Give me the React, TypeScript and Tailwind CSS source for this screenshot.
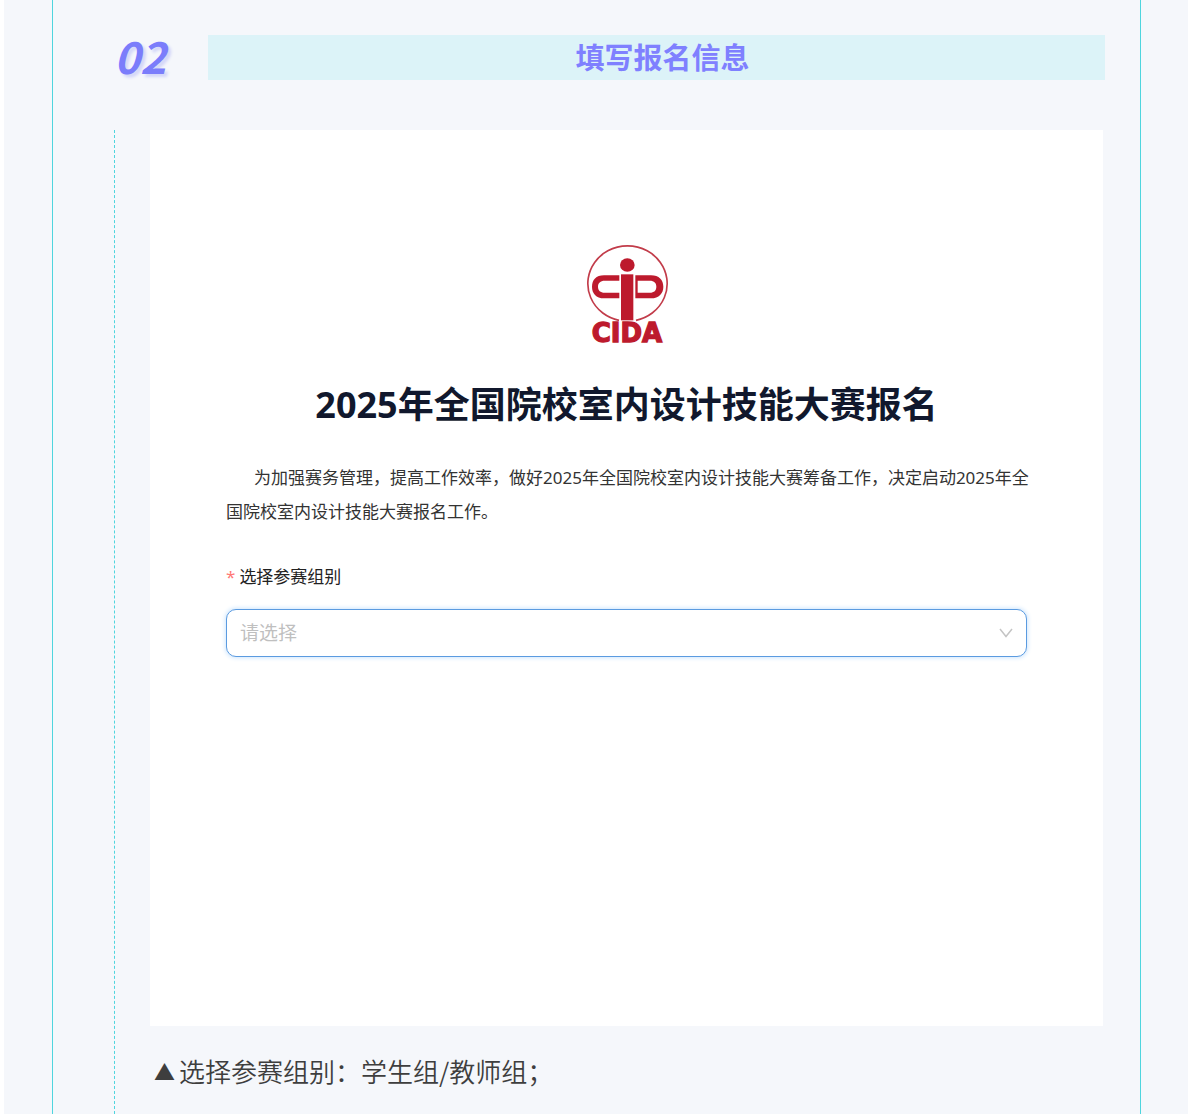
import { useState } from "react";

const groups = ["学生组", "教师组"];

function CidaLogo() {
  return (
    <svg
      viewBox="75 45 252 315"
      role="img"
      aria-label="CIDA"
      className="h-[105px] w-[84px]"
      fill="#bd1a2d"
    >
      <path
        d="M177 271 A119 113 0 1 1 228 271"
        fill="none"
        stroke="#c23c4a"
        strokeWidth="5"
      />
      <ellipse cx="202" cy="105" rx="22" ry="20" />
      <rect x="183" y="133" width="37" height="138" />
      <path d="M178 136 H132 C108 136 96 150 96 170 C96 190 108 205 132 205 H178 V188 H134 C121 188 114 181 114 170 C114 159 121 152 134 152 H178 Z" />
      <path
        fillRule="evenodd"
        d="M226 136 H273 C297 136 310 150 310 170 C310 190 297 205 273 205 H226 Z M233 152 V188 H269 C283 188 289 181 289 170 C289 159 283 152 269 152 Z"
      />
      <text
        x="201"
        y="336"
        textAnchor="middle"
        fontFamily="DejaVu Sans, sans-serif"
        fontWeight="700"
        fontSize="78"
        stroke="#bd1a2d"
        strokeWidth="4"
      >
        CIDA
      </text>
    </svg>
  );
}

function SignupCard() {
  const [group, setGroup] = useState("");

  return (
    <form className="min-h-[896px] bg-white px-[76px] pt-[115px] pb-16">
      <div className="flex justify-center">
        <CidaLogo />
      </div>

      <h1 className="mt-[31px] text-center text-[36px] leading-[48px] font-bold text-[#11182d]">
        2025年全国院校室内设计技能大赛报名
      </h1>

      <p className="-mr-2 mt-8 indent-7 text-[17px] leading-[34px] text-[#333]">
        为加强赛务管理，提高工作效率，做好2025年全国院校室内设计技能大赛筹备工作，决定启动2025年全国院校室内设计技能大赛报名工作。
      </p>

      <label
        htmlFor="group"
        className="mt-9 flex items-center gap-1 text-[17px] leading-6 text-[#222]"
      >
        <span className="text-[#ff7875]">*</span>
        选择参赛组别
      </label>

      <div className="relative mt-5">
        <select
          id="group"
          value={group}
          onChange={(event) => setGroup(event.target.value)}
          className="h-12 w-full appearance-none rounded-[10px] border border-[#5b9be0] bg-white px-[13px] text-[19px] text-[#bfbfbf] shadow-[0_0_4px_1px_#cfe6fd] outline-none"
        >
          <option value="">请选择</option>
          {groups.map((name) => (
            <option key={name} value={name}>
              {name}
            </option>
          ))}
        </select>
        <svg
          viewBox="0 0 14 10"
          className="pointer-events-none absolute top-[19px] right-[14px] h-[10px] w-[14px]"
          fill="none"
          stroke="#c4c4c4"
          strokeWidth="1.5"
        >
          <path d="M1 1 L7 8.5 L13 1" />
        </svg>
      </div>
    </form>
  );
}

export default function App() {
  return (
    <div className="bg-white pl-1 font-['Noto_Sans','Noto_Sans_CJK_SC',sans-serif]">
      <div className="bg-[#f5f7fb] pr-[47px] pl-12">
        <main className="min-h-screen border-x border-[#4fd5de] pt-[35px] pr-[35px] pl-[61px]">
          <header className="flex h-[45px] items-start">
            <span className="w-[94px] shrink-0 font-['Noto_Sans_CJK_SC',sans-serif] text-[44px] leading-10 font-bold text-[#7b7dfb] italic [text-shadow:3px_3px_3px_#d3d6f8]">
              02
            </span>
            <h2 className="flex-1 bg-[#dcf3f8] pl-3 text-center text-[29px] leading-[45px] font-bold text-[#7f80ff]">
              填写报名信息
            </h2>
          </header>

          <section className="mt-[50px] min-h-[984px] border-l border-dashed border-[#4fd5de] pr-[2px] pl-[35px]">
            <SignupCard />
            <p className="mt-6 flex items-center gap-1 pl-1 font-['Noto_Sans_CJK_SC',sans-serif] text-[26px] leading-[42px] font-[350] text-[#3e3e3e]">
              <span className="text-[21px]">▲</span>
              选择参赛组别：学生组/教师组；
            </p>
          </section>
        </main>
      </div>
    </div>
  );
}
